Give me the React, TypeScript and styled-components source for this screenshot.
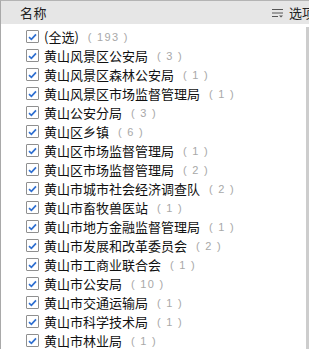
import React from "react";
import styled, { createGlobalStyle } from "styled-components";

const Global = createGlobalStyle`
  html, body { margin: 0; padding: 0; background: #ffffff; overflow: hidden; }
  body { font-family: "Noto Sans CJK SC", "Liberation Sans", sans-serif; }
`;

const Panel = styled.div`
  width: 330px;
  height: 349px;
  box-sizing: border-box;
  border-left: 1px solid #a9a9a9;
  border-top: 1px solid #b4b4b4;
  display: flex;
  flex-direction: column;
  overflow: hidden;
`;

const Header = styled.div`
  height: 23px;
  flex: none;
  background: #e6e6e6;
  display: flex;
  align-items: center;
  justify-content: space-between;
  padding: 0 15px 0 19px;
  font-size: 13px;
  color: #222;
  line-height: 1;
`;

const HeaderTitle = styled.span`
  letter-spacing: 0.5px;
`;

const Options = styled.span`
  display: flex;
  align-items: center;
  gap: 6px;
  color: #222;
`;

const Body = styled.div`
  flex: 1;
  display: flex;
  min-height: 0;
`;

const List = styled.ul`
  list-style: none;
  margin: 0;
  padding: 3px 0 0 25px;
  width: 305px;
  flex: none;
  box-sizing: border-box;
`;

const Row = styled.li`
  height: 19px;
  display: flex;
  align-items: center;
  white-space: nowrap;
`;

const Box = styled.span`
  width: 11px;
  height: 11px;
  flex: none;
  border: 1px solid #8f8f8f;
  border-radius: 1px;
  background: #fff;
  display: flex;
  align-items: center;
  justify-content: center;
  margin-right: 5px;
`;

const Label = styled.span`
  font-size: 13px;
  color: #111;
  line-height: 1;
`;

const Count = styled.span`
  font-family: "Liberation Sans", sans-serif;
  font-size: 11px;
  color: #a8a8a8;
  white-space: pre;
  margin-left: 9px;
  letter-spacing: 1.3px;
`;

const Track = styled.div`
  width: 20px;
  flex: none;
  padding-top: 3px;
  display: flex;
  flex-direction: column;
`;

const Thumb = styled.div`
  flex: 1;
  background: #cdcdcd;
`;

const Check = () => (
  <svg width="9" height="8" viewBox="0 0 9 8">
    <path d="M1 4.2 L3.4 6.4 L8 1.4" fill="none" stroke="#2f6fd0" strokeWidth="1.7" />
  </svg>
);

const OptionsIcon = () => (
  <svg width="11" height="10" viewBox="0 0 11 10">
    <rect x="0" y="1" width="11" height="1" fill="#555" />
    <rect x="0" y="4.5" width="11" height="1" fill="#555" />
    <rect x="0" y="8" width="6" height="1" fill="#555" />
    <path d="M7 7.5 L11 7.5 L9 9.5 Z" fill="#555" />
  </svg>
);

const items: [string, number][] = [
  ["(全选)", 193],
  ["黄山风景区公安局", 3],
  ["黄山风景区森林公安局", 1],
  ["黄山风景区市场监督管理局", 1],
  ["黄山公安分局", 3],
  ["黄山区乡镇", 6],
  ["黄山区市场监督管理局", 1],
  ["黄山区市场监督管理局", 2],
  ["黄山市城市社会经济调查队", 2],
  ["黄山市畜牧兽医站", 1],
  ["黄山市地方金融监督管理局", 1],
  ["黄山市发展和改革委员会", 2],
  ["黄山市工商业联合会", 1],
  ["黄山市公安局", 10],
  ["黄山市交通运输局", 1],
  ["黄山市科学技术局", 1],
  ["黄山市林业局", 1],
];

export default function App() {
  return (
    <>
      <Global />
      <Panel>
        <Header>
          <HeaderTitle>名称</HeaderTitle>
          <Options>
            <OptionsIcon />
            <span>选项</span>
          </Options>
        </Header>
        <Body>
          <List>
            {items.map(([name, n], i) => (
              <Row key={i}>
                <Box>
                  <Check />
                </Box>
                <Label>{name}</Label>
                <Count>{`( ${n} )`}</Count>
              </Row>
            ))}
          </List>
          <Track>
            <Thumb />
          </Track>
        </Body>
      </Panel>
    </>
  );
}
